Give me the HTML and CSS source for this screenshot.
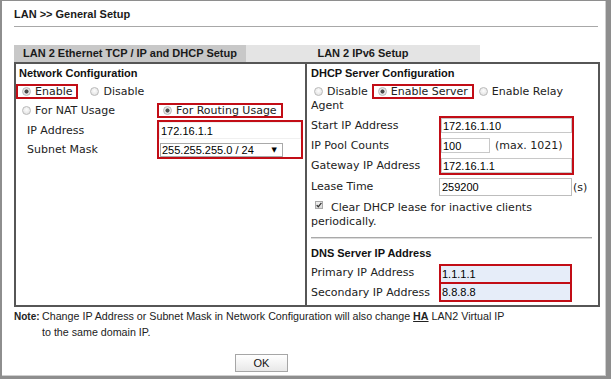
FILE: index.html
```html
<!DOCTYPE html>
<html lang="en">
<head>
  <meta charset="UTF-8" />
  <title>LAN - General Setup</title>
  <link rel="stylesheet" href="styles.css">
</head>
<body>
  <div class="frame">
    <h1 class="page-title">LAN &gt;&gt; General Setup</h1>

    <!-- Tabs -->
    <div class="tabs">
      <div class="tab tab-main">LAN 2 Ethernet TCP / IP and DHCP Setup</div>
      <div class="tab tab-v6">LAN 2 IPv6 Setup</div>
    </div>

    <div class="panel">
      <!-- Network Configuration -->
      <div class="col col-left">
        <div class="sec-title">Network Configuration</div>
        <div class="opt-row row-enable">
          <label class="opt hl"><input type="radio" name="lan" checked>Enable</label>
          <label class="opt opt-disable"><input type="radio" name="lan">Disable</label>
        </div>
        <div class="opt-row row-usage">
          <label class="opt opt-nat"><input type="radio" name="usage">For NAT Usage</label>
          <label class="opt hl"><input type="radio" name="usage" checked>For Routing Usage</label>
        </div>
        <div class="group group-net">
          <div class="labels">
            <div class="lbl lbl-ip">IP Address</div>
            <div class="lbl lbl-mask">Subnet Mask</div>
          </div>
          <div class="hl box-net">
            <input class="txt" type="text" value="172.16.1.1">
            <div class="select"><span>255.255.255.0 / 24</span><span class="arrow">&#9660;</span></div>
          </div>
        </div>
      </div>

      <!-- DHCP Server Configuration -->
      <div class="col col-right">
        <div class="sec-title">DHCP Server Configuration</div>
        <div class="opt-row row-dhcp">
          <label class="opt"><input type="radio" name="dhcp">Disable</label>
          <label class="opt hl opt-server"><input type="radio" name="dhcp" checked>Enable Server</label>
          <label class="opt opt-relay"><input type="radio" name="dhcp">Enable Relay</label>
        </div>
        <div class="agent">Agent</div>

        <div class="group group-dhcp">
          <div class="labels labels-dhcp">
            <div class="lbl">Start IP Address</div>
            <div class="lbl">IP Pool Counts</div>
            <div class="lbl">Gateway IP Address</div>
          </div>
          <div class="hl box-dhcp">
            <input class="txt" type="text" value="172.16.1.10">
            <div class="pool-row">
              <input class="txt" type="text" value="100">
              <span class="max">(max. 1021)</span>
            </div>
            <input class="txt" type="text" value="172.16.1.1">
          </div>
        </div>

        <div class="lease">
          <div class="lbl lbl-lease">Lease Time</div>
          <input class="txt" type="text" value="259200">
          <span class="unit">(s)</span>
        </div>

        <p class="check-line"><svg class="checkbox" viewBox="0 0 8 8"><defs><linearGradient id="cb" x1="0" y1="0" x2="0" y2="1"><stop offset="0" stop-color="#f2f2f2"/><stop offset="1" stop-color="#d6d6d6"/></linearGradient></defs><rect x="0.5" y="0.5" width="7" height="7" fill="url(#cb)" stroke="#a9a9a9"/><path d="M1.7 4.1 L3.3 5.8 L6.4 1.9" fill="none" stroke="#333" stroke-width="1.3"/></svg>Clear DHCP lease for inactive clients<br>periodically.</p>

        <div class="sep"></div>

        <div class="sec-title dns-title">DNS Server IP Address</div>
        <div class="group group-dns">
          <div class="labels labels-dns">
            <div class="lbl lbl-pri">Primary IP Address</div>
            <div class="lbl lbl-sec">Secondary IP Address</div>
          </div>
          <div class="hl box-dns">
            <input class="txt" type="text" value="1.1.1.1">
            <input class="txt" type="text" value="8.8.8.8">
          </div>
        </div>
      </div>
    </div>

    <div class="note">
      <span class="note-label">Note:</span>
      <span>Change IP Address or Subnet Mask in Network Configuration will also change <b class="ha">HA</b> LAN2 Virtual IP<br>to the same domain IP.</span>
    </div>

    <div class="actions">
      <button class="btn">OK</button>
    </div>
  </div>
</body>
</html>
```

FILE: styles.css
```css
body {
  margin: 0;
  font-family: "DejaVu Sans", Verdana, sans-serif;
  font-size: 11px;
  color: #222;
  background-color: #fff;
}

.frame {
  box-sizing: border-box;
  width: 611px;
  height: 379px;
  border-style: solid;
  border-color: #8e8e8e;
  border-width: 1px 5px 3px 2px;
  box-shadow: inset -1px -1px 0 #cfcfcf;
  padding: 0 6px 0 12px;
}

.page-title {
  margin: 0 2px 0 0;
  padding: 7px 0 5px;
  font: bold 11px/13px "Liberation Sans", Arial, sans-serif;
  color: #1a1a1a;
  border-bottom: 1px solid #a8a8a8;
}

/* tabs */
.tabs {
  display: flex;
  margin-top: 18px;
}

.tab {
  height: 17px;
  font: bold 11px/17px "Liberation Sans", Arial, sans-serif;
  text-align: center;
  color: #1a1a1a;
}

.tab-main {
  width: 232px;
  background-color: #c8c8c8;
}

.tab-v6 {
  width: 234px;
  background-color: #e4e4e4;
}

/* main table */
.panel {
  display: grid;
  grid-template-columns: 289px 1fr;
  border: 2px solid #565656;
}

.col {
  padding: 2px 0 3px;
}

.col-right {
  border-left: 2px solid #565656;
  padding: 2px 6px 3px 4px;
}

.sec-title {
  font: bold 11px/14px "Liberation Sans", Arial, sans-serif;
  color: #111;
}

.col-left .sec-title {
  padding-left: 3px;
}

.hl {
  border: 2px solid #c20d16;
}

/* radio rows */
.opt-row {
  display: flex;
  align-items: center;
  height: 15px;
  margin-top: 4px;
}

.opt {
  display: flex;
  align-items: center;
  height: 11px;
  line-height: 11px;
  white-space: nowrap;
}

.opt.hl {
  padding: 0 4px;
}

.opt input {
  -webkit-appearance: none;
  appearance: none;
  box-sizing: border-box;
  width: 9px;
  height: 9px;
  margin: 0 4px 0 0;
  border: 1px solid #bababa;
  border-radius: 50%;
  background: radial-gradient(circle at 50% 40%, #fdfdfd, #dcdcdc);
}

.opt input:checked {
  background: radial-gradient(circle, #4a4a4a 0 1.7px, #ececec 2.4px, #d6d6d6 100%);
}

.opt-disable {
  margin-left: 12px;
}

.opt-nat {
  box-sizing: border-box;
  width: 141px;
  padding-left: 6px;
}

.row-dhcp {
  padding-left: 3px;
}

.opt-server {
  margin-left: 4px;
}

.opt-relay {
  margin-left: 5px;
}

.agent {
  line-height: 14px;
}

/* label / field groups */
.group {
  display: flex;
}

.labels {
  display: flex;
  flex-direction: column;
  box-sizing: border-box;
  padding-top: 2px;
}

.lbl {
  white-space: nowrap;
}

.txt {
  box-sizing: border-box;
  margin: 0;
  padding: 0 1px;
  font: 11px "Liberation Sans", Arial, sans-serif;
  color: #000;
  background-color: #fff;
  border: 1px solid #c8c8c8;
  border-radius: 0;
  outline: none;
}

.group-net {
  margin-top: 2px;
}

.group-net .labels {
  width: 141px;
  padding-left: 11px;
}

.lbl-ip {
  line-height: 17px;
  margin-bottom: 4px;
}

.lbl-mask {
  line-height: 14px;
}

.box-net {
  box-sizing: border-box;
  width: 146px;
  display: flex;
  flex-direction: column;
}

.box-net .txt {
  width: 100%;
  height: 17px;
  border-color: #f0f0f0;
}

.select {
  box-sizing: border-box;
  display: flex;
  align-items: center;
  justify-content: space-between;
  width: 123px;
  height: 14px;
  margin: 4px 0 0 1px;
  padding: 0 5px 0 1px;
  border: 1px solid #a9a9a9;
  font: 11px/12px "Liberation Sans", Arial, sans-serif;
  color: #000;
}

.arrow {
  font-family: "DejaVu Sans", sans-serif;
  font-size: 7px;
}

.col-right .labels {
  width: 128px;
}

.group-dhcp {
  margin-top: 3px;
}

.labels-dhcp {
  gap: 5px;
}

.labels-dhcp .lbl {
  line-height: 15px;
}

.box-dhcp {
  box-sizing: border-box;
  width: 135px;
  display: flex;
  flex-direction: column;
  gap: 5px;
}

.box-dhcp .txt {
  width: 100%;
  height: 15px;
}

.pool-row {
  display: flex;
  align-items: center;
}

.box-dhcp .pool-row .txt {
  width: 49px;
}

.max {
  margin-left: 5px;
  line-height: 15px;
}

.lease {
  display: flex;
  align-items: center;
  height: 18px;
  margin-top: 3px;
}

.lbl-lease {
  width: 128px;
  line-height: 18px;
}

.lease .txt {
  width: 133px;
  height: 18px;
  padding-left: 2px;
  border-color: #bdbdbd;
}

.unit {
  margin-left: 1px;
}

.check-line {
  margin: 5px 0 0;
  line-height: 14px;
}

.checkbox {
  width: 8px;
  height: 8px;
  margin: 0 8px 0 4px;
  vertical-align: 2px;
}

.sep {
  margin-top: 8px;
  border-top: 1px solid #a9a9a9;
  border-bottom: 1px solid #dcdcdc;
}

.dns-title {
  margin-top: 7px;
}

.group-dns {
  margin-top: 4px;
}

.lbl-pri {
  height: 16px;
  line-height: 14px;
}

.lbl-sec {
  padding-top: 3px;
  line-height: 16px;
}

.box-dns {
  box-sizing: border-box;
  width: 133px;
  display: flex;
  flex-direction: column;
}

.box-dns .txt {
  width: 100%;
  height: 16px;
  border: none;
  background-color: #e6edf9;
}

.box-dns .txt + .txt {
  height: 18px;
  border-top: 2px solid #c20d16;
}

/* note + button */
.note {
  display: flex;
  align-items: baseline;
  margin-top: 1px;
  font: 10.7px/16px "Liberation Sans", Arial, sans-serif;
  color: #222;
}

.note-label {
  flex: none;
  width: 28px;
  font-weight: bold;
  font-size: 10px;
}

.ha {
  text-decoration: underline;
}

.actions {
  margin: 14px 0 0 221px;
}

.btn {
  width: 53px;
  height: 18px;
  padding: 0;
  font: 11px "Liberation Sans", Arial, sans-serif;
  color: #111;
  border: 1px solid #a6a6a6;
  border-radius: 0;
  background: linear-gradient(#ffffff, #e8e8e8);
}
```
